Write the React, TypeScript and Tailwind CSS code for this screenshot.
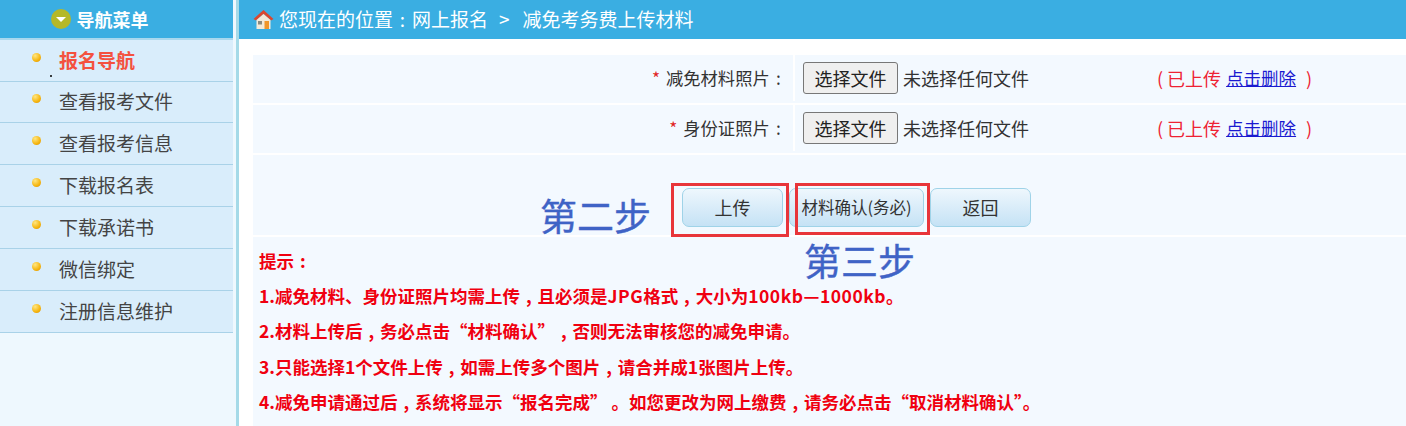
const font = "[font-family:'Noto_Sans_CJK_SC','Liberation_Sans',sans-serif]";

const menu = [
  { label: "报名导航", h: "h-[42px]", active: true },
  { label: "查看报考文件", h: "h-[41px]" },
  { label: "查看报考信息", h: "h-[42px]" },
  { label: "下载报名表", h: "h-[42px]" },
  { label: "下载承诺书", h: "h-[42px]" },
  { label: "微信绑定", h: "h-[42px]" },
  { label: "注册信息维护", h: "h-[42px]" },
];

function Mark({ c }: { c: string }) {
  return <span className="inline-block w-[1em] text-center">{c}</span>;
}

function House() {
  return (
    <svg width="21" height="21" viewBox="0 0 21 21" className="shrink-0">
      <path d="M10.5 1 L20.5 10 L18 11.5 L10.5 5 L3 11.5 L.5 10 Z" fill="#d9472f" />
      <path d="M3.5 11 L10.5 5 L17.5 11 V20 H3.5 Z" fill="#f3ead9" />
      <rect x="11.5" y="12" width="4.5" height="8" fill="#f0962a" />
      <rect x="5" y="12" width="4" height="3.5" fill="#8a8a80" />
    </svg>
  );
}

function FileRow({ label }: { label: string }) {
  return (
    <div className="flex h-12 bg-[#f3f9ff] pb-[2px] text-[#333]">
      <div className="flex w-[540px] items-center justify-end pr-[6px] text-[17.3px]">
        <span className="mr-[6px] text-[#e02020]">*</span>
        {label}
        <Mark c=":" />
      </div>
      <div className="flex flex-1 items-center border-l-2 border-white pl-[8px] text-[18px]">
        <button className="h-8 w-[95px] rounded-[3px] border border-[#777] bg-[#efefef] text-[18px] text-[#222]">
          选择文件
        </button>
        <span className="ml-[5px] w-[254px]">未选择任何文件</span>
        <span className="text-[#ee2233]">(</span>
        <span className="ml-[4px] text-[#ee2233]">已上传</span>
        <a className="ml-[5px] text-[17.5px] text-[#1a1ad0] underline">点击删除</a>
        <span className="ml-[10px] text-[#ee2233]">)</span>
      </div>
    </div>
  );
}

function BlueButton({ children, className }: { children: React.ReactNode; className: string }) {
  return (
    <button
      className={`h-[39px] rounded-[7px] border border-[#9fd3e8] bg-gradient-to-b from-[#eef7fd] to-[#c5e2f5] text-[#333] ${className}`}
    >
      {children}
    </button>
  );
}

export default function App() {
  return (
    <div className={`flex h-[426px] w-[1406px] overflow-hidden bg-white ${font}`}>
      <aside className="w-[236px] shrink-0 bg-[#eef8fe]">
        <div className="flex h-[38px] w-[233px] items-center justify-center gap-[6px] bg-[#3aaee2] pr-[34px] text-[18px] font-bold text-white">
          <span className="flex h-5 w-5 items-center justify-center rounded-full bg-[#b5b828]">
            <span className="h-0 w-0 border-x-[5px] border-t-[5px] border-x-transparent border-t-white" />
          </span>
          导航菜单
        </div>
        <div className="h-[2px] w-[233px] bg-[#a8d8ee]" />
        <ul className="w-[233px]">
          {menu.map((m) => (
            <li
              key={m.label}
              className={`relative flex ${m.h} items-center border-b border-[#a9d2e8] bg-[#d9edfb] pl-[32px] pb-[1px]`}
            >
              <span className="h-[9px] w-[9px] -translate-y-[3px] rounded-full bg-[radial-gradient(circle_at_35%_30%,#ffe680,#f5b50f_60%,#d88a00)]" />
              <span
                className={`ml-[18px] text-[19px] ${m.active ? "font-bold text-[#f4513f]" : "text-[#444]"}`}
              >
                {m.label}
              </span>
              {m.active && <span className="absolute left-[50px] top-[35px] h-[2px] w-[2px] rounded-full bg-black" />}
            </li>
          ))}
        </ul>
      </aside>

      <div className="w-[3px] shrink-0 bg-[#a5dae8]" />

      <main className="flex min-w-0 flex-1 flex-col">
        <header className="flex h-[39px] shrink-0 items-center bg-[#3aaee2] pl-[14px] text-[19px] text-white">
          <House />
          <span className="ml-[5px]">您现在的位置</span>
          <Mark c=":" />
          <span>网上报名</span>
          <span className="ml-[11px]">&gt;</span>
          <span className="ml-[13px]">减免考务费上传材料</span>
        </header>
        <div className="ml-[14px] mt-4 flex flex-1 flex-col gap-[2px]">
          <FileRow label="减免材料照片" />
          <FileRow label="身份证照片" />
          <div className="relative flex h-[80px] shrink-0 items-start gap-[6px] bg-[#f3f9ff] pl-[429px] pt-[33px]">
            <BlueButton className="w-[101px] text-[18px]">上传</BlueButton>
            <BlueButton className="w-[135px] whitespace-nowrap text-[16.5px]">材料确认(务必)</BlueButton>
            <BlueButton className="w-[101px] text-[18px]">返回</BlueButton>

            <span className="absolute left-[287px] top-[40px] text-[37px] leading-[40px] text-[#3f63c6] [-webkit-text-stroke:0.4px_#3f63c6]">第二步</span>
            <span className="absolute left-[418px] top-[28px] h-[54px] w-[118px] border-[3px] border-[#e8353a]" />
            <span className="absolute left-[542px] top-[28px] h-[52px] w-[135px] border-[3px] border-[#e8353a]" />
            <span className="absolute left-[551px] top-[85px] z-10 text-[37px] leading-[40px] text-[#3f63c6] [-webkit-text-stroke:0.4px_#3f63c6]">第三步</span>
          </div>
          <div className="flex flex-1 flex-col whitespace-pre bg-[#f3f9ff] pl-[6px] pt-[6px] text-[17.5px] font-bold leading-[35.2px] text-[#f00010]">
            <p>提示<Mark c=":" /></p>
            <p>
              1.减免材料、身份证照片均需上传<Mark c="," />且必须是<span className="tracking-[0.5px]">JPG</span>格式<Mark c="," />大小为<span className="tracking-[0.5px]">100kb—1000kb</span>。
            </p>
            <p>2.材料上传后<Mark c="," />务必点击“材料确认”<Mark c="," />否则无法审核您的减免申请。</p>
            <p>3.只能选择1个文件上传<Mark c="," />如需上传多个图片<Mark c="," />请合并成1张图片上传。</p>
            <p>4.减免申请通过后<Mark c="," />系统将显示“报名完成” 。如您更改为网上缴费<Mark c="," />请务必点击“取消材料确认”。</p>
          </div>
        </div>
      </main>
    </div>
  );
}
